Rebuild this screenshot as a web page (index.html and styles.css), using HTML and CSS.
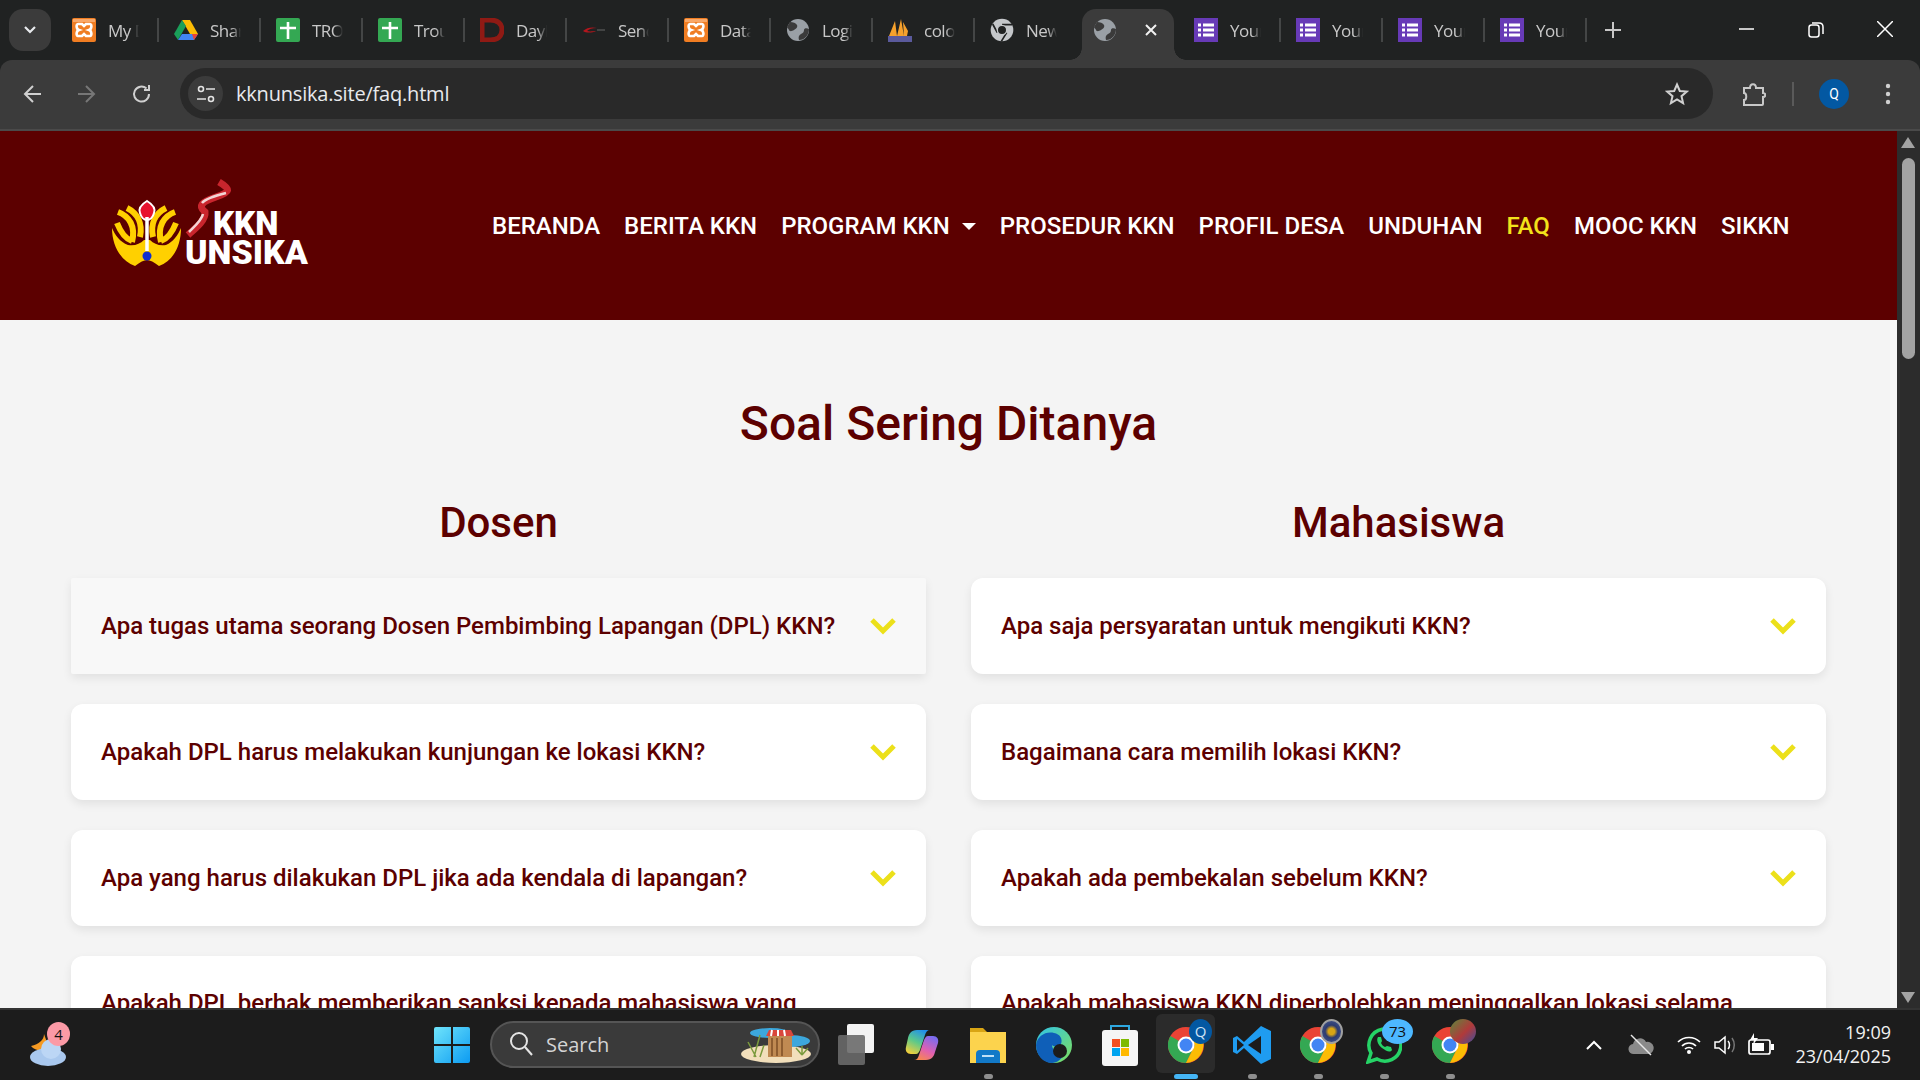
FILE: index.html
```html
<!DOCTYPE html>
<html lang="en">
<head>
    <meta charset="UTF-8">
    <title>FAQ - KKN Unsika</title>
    <link rel="stylesheet" href="styles.css">
</head>
<body>
    <!-- shared icons -->
    <svg class="defs" width="0" height="0">
        <symbol id="i-xampp" viewBox="0 0 24 24">
            <rect width="24" height="24" rx="2" fill="#f07d22"/>
            <rect x="1" y="1" width="22" height="3" fill="#f9a868"/>
            <path d="M6 6h4l2 2 2-2h4c2 0 2 5-1 6 3 1 3 6 1 6h-4l-2-2-2 2H6c-2 0-2-5 1-6-3-1-3-6-1-6z" fill="none" stroke="#fff" stroke-width="2.6"/>
        </symbol>
        <symbol id="i-sheets" viewBox="0 0 24 24">
            <rect width="24" height="24" rx="2" fill="#34a853"/>
            <path d="M12 4v17M4 10h16" stroke="#fff" stroke-width="2.6"/>
        </symbol>
        <symbol id="i-forms" viewBox="0 0 24 24">
            <rect width="24" height="24" fill="#673ab7"/>
            <path d="M9 7h11M9 12h11M9 17h11M4 7h3M4 12h3M4 17h3" stroke="#fff" stroke-width="3"/>
        </symbol>
        <symbol id="i-globe" viewBox="0 0 24 24">
            <circle cx="12" cy="12" r="11" fill="#9aa0a6"/>
            <path d="M4 4c3 0 6 1 7 3s-1 4-3 5-4 2-5 0-2-2-2-3zM13 22c-1-3 0-5 2-6s3-2 3-4 3-2 5-1c0 6-4 11-10 11z" fill="#3b3b3b"/>
        </symbol>
        <symbol id="i-chrome" viewBox="0 0 36 36">
            <circle cx="18" cy="18" r="18" fill="#ea4335"/>
            <path d="M18 18L2.4 9A18 18 0 0 0 18 36L27 18z" fill="#34a853"/>
            <path d="M18 10h15.600A18 18 0 0 1 18 36l9-18z" fill="#fbbc04"/>
            <circle cx="18" cy="18" r="8.500" fill="#fff"/>
            <circle cx="18" cy="18" r="6.500" fill="#4285f4"/>
        </symbol>
    </svg>

    <div class="tabstrip">
        <button class="tab-search">
            <svg width="14" height="10" viewBox="0 0 14 10"><path d="M2 2l5 5 5-5" fill="none" stroke="#e8eaed" stroke-width="2.200"/></svg>
        </button>
        <div class="tab"><svg class="favicon"><use href="#i-xampp"/></svg><span class="tab-label">My Dashboard</span></div>
        <div class="tab">
            <svg class="favicon" viewBox="0 0 24 24"><path d="M8 2h8l8 14h-8z" fill="#fbbc04"/><path d="M8 2L0 16l4 6 8-14z" fill="#1a9f5a"/><path d="M4 22h16l4-6H8z" fill="#4285f4"/><path d="M20 22l4-6h-6z" fill="#ea4335"/></svg>
            <span class="tab-label">Shared</span>
        </div>
        <div class="tab"><svg class="favicon"><use href="#i-sheets"/></svg><span class="tab-label">TROUBLE</span></div>
        <div class="tab"><svg class="favicon"><use href="#i-sheets"/></svg><span class="tab-label">Trouble</span></div>
        <div class="tab">
            <svg class="favicon" viewBox="0 0 24 24"><path d="M2 2h8c8 0 12 4 12 10s-4 10-12 10H2z" fill="none" stroke="#8f1a14" stroke-width="5"/></svg>
            <span class="tab-label">Daybook</span>
        </div>
        <div class="tab">
            <svg class="favicon" viewBox="0 0 24 24"><path d="M1 13c4-4 10-4 14-3-5 0-8 1-10 3 3 1 7 0 9 0-4 2-10 2-13 0z" fill="#b3161d"/><path d="M15 12h8" stroke="#666" stroke-width="1"/></svg>
            <span class="tab-label">Sendiri</span>
        </div>
        <div class="tab"><svg class="favicon"><use href="#i-xampp"/></svg><span class="tab-label">Database</span></div>
        <div class="tab"><svg class="favicon"><use href="#i-globe"/></svg><span class="tab-label">Login</span></div>
        <div class="tab">
            <svg class="favicon" viewBox="0 0 24 24"><path d="M1 18L7 3l2 15zM9 18l4-17 3 17zM15 4l5 9-1 5h-3z" fill="#f6a12c"/><rect x="0" y="18" width="24" height="6" fill="#5a5a9c"/></svg>
            <span class="tab-label">colors</span>
        </div>
        <div class="tab tab-nosep"><svg class="favicon" viewBox="0 0 36 36"><circle cx="18" cy="18" r="17" fill="#c4c7ca"/><path d="M18 10h15M11 22L4 9M25 22l-8 13" stroke="#202222" stroke-width="2.500"/><circle cx="18" cy="18" r="7" fill="#202222" stroke="#c4c7ca" stroke-width="2"/></svg><span class="tab-label">New Tab</span></div>
        <div class="tab tab-active">
            <svg class="favicon"><use href="#i-globe"/></svg>
            <svg class="tab-close" width="14" height="14" viewBox="0 0 14 14"><path d="M2 2l10 10M12 2L2 12" stroke="#f1f1f1" stroke-width="2"/></svg>
        </div>
        <div class="tab"><svg class="favicon"><use href="#i-forms"/></svg><span class="tab-label">Your form</span></div>
        <div class="tab"><svg class="favicon"><use href="#i-forms"/></svg><span class="tab-label">Your form</span></div>
        <div class="tab"><svg class="favicon"><use href="#i-forms"/></svg><span class="tab-label">Your form</span></div>
        <div class="tab"><svg class="favicon"><use href="#i-forms"/></svg><span class="tab-label">Your form</span></div>
        <svg class="new-tab" width="16" height="16" viewBox="0 0 16 16"><path d="M8 0v16M0 8h16" stroke="#c7c7c7" stroke-width="2"/></svg>
        <div class="window-controls">
            <svg width="16" height="16" viewBox="0 0 16 16"><path d="M0 8h15" stroke="#fff" stroke-width="1.500"/></svg>
            <svg width="16" height="18" viewBox="0 0 16 18"><rect x="1" y="4" width="10" height="12" rx="2.500" fill="none" stroke="#fff" stroke-width="1.500"/><path d="M4 2h7c2 0 4 1 4 4v7" fill="none" stroke="#fff" stroke-width="1.500"/></svg>
            <svg width="16" height="16" viewBox="0 0 16 16"><path d="M0 0l16 16M16 0L0 16" stroke="#fff" stroke-width="1.500"/></svg>
        </div>
    </div>

    <div class="toolbar">
        <svg class="tool-icon" width="20" height="20" viewBox="0 0 20 20"><path d="M18 10H3M10 2l-8 8 8 8" fill="none" stroke="#d0d0d0" stroke-width="2"/></svg>
        <svg class="tool-icon" width="20" height="20" viewBox="0 0 20 20"><path d="M2 10h15M10 2l8 8-8 8" fill="none" stroke="#777" stroke-width="2"/></svg>
        <svg class="tool-icon reload" width="20" height="20" viewBox="0 0 20 20"><path d="M17 10a7.500 7.500 0 1 1-2.500-5.500M17 1v5h-5" fill="none" stroke="#d0d0d0" stroke-width="2"/></svg>
        <div class="addressbar">
            <span class="site-info">
                <svg width="20" height="20" viewBox="0 0 20 20"><circle cx="5" cy="5" r="2.500" fill="none" stroke="#e3e3e3" stroke-width="1.600"/><path d="M10 5h9M1 15h9" stroke="#e3e3e3" stroke-width="1.600"/><circle cx="15" cy="15" r="2.500" fill="none" stroke="#e3e3e3" stroke-width="1.600"/></svg>
            </span>
            <span class="url">kknunsika.site/faq.html</span>
            <svg class="star" width="24" height="24" viewBox="0 0 24 24"><path d="M12 2.500l2.800 6.500 7 .6-5.300 4.600 1.600 6.900-6.100-3.700-6.100 3.700 1.600-6.900L2.200 9.600l7-.6z" fill="none" stroke="#d0d0d0" stroke-width="2"/></svg>
        </div>
        <svg class="ext-icon" width="24" height="26" viewBox="0 0 24 26"><path d="M2 7h6c0-5 6-5 6 0h7v5c3 0 3 4 0 4v7a1 1 0 0 1-1 1H2v-5c3 0 3-7 0-7z" fill="none" stroke="#c8c8c8" stroke-width="2"/></svg>
        <span class="tool-sep"></span>
        <span class="avatar">Q</span>
        <svg class="menu-dots" width="6" height="24" viewBox="0 0 6 24"><circle cx="3" cy="4" r="2.200" fill="#d0d0d0"/><circle cx="3" cy="12" r="2.200" fill="#d0d0d0"/><circle cx="3" cy="20" r="2.200" fill="#d0d0d0"/></svg>
    </div>

    <div class="viewport">
        <div class="page">
            <header class="site-header">
                <svg class="logo" width="280" height="120" viewBox="0 0 280 120">
                    <!-- emblem -->
                    <path d="M32 67c0 18 9 33 23 38 5-4 9-6 12-6s7 2 12 6c14-5 22-20 22-38-3 7-8 14-15 17-7 1-12-1-16-5l-6 0c-4 4-9 6-16 5-8-3-13-10-16-17z" fill="#ffd000"/>
                    <path d="M38 51c11 4 18 14 14 30M47 47c10 5 16 15 13 29M95 51c-11 4-18 14-14 30M86 47c-10 5-16 15-13 29" fill="none" stroke="#ffd000" stroke-width="6"/>
                    <path d="M37 62c4 10 9 16 15 18M96 62c-4 10-9 16-15 18" fill="none" stroke="#ffd000" stroke-width="6"/>
                    <path d="M60 52c-2-5 2-9 7-12 5 3 9 7 7 12-1 4-4 7-7 7s-6-3-7-7z" fill="#e8112d" stroke="#fff" stroke-width="2"/>
                    <path d="M67 56v34" stroke="#fff" stroke-width="3.500"/>
                    <circle cx="67" cy="95" r="4.500" fill="#0f2fd0"/>
                    <!-- ribbon -->
                    <path d="M139 21c12 7 12 10-3 15-15 5-18 9-11 15 1 8-9 16-17 23" fill="none" stroke="#c9252d" stroke-width="7"/>
                    <path d="M146 32c-8 2-20 5-24 10M123 53c-1 6-8 12-14 18" fill="none" stroke="#f3d5d5" stroke-width="2.500"/>
                    <text class="logo-text" x="133" y="74" font-size="33">KKN</text>
                    <text class="logo-text" x="105" y="103" font-size="34">UNSIKA</text>
                </svg>
                <nav class="site-nav">
                    <a href="#">BERANDA</a>
                    <a href="#">BERITA KKN</a>
                    <a href="#" class="has-caret">PROGRAM KKN</a>
                    <a href="#">PROSEDUR KKN</a>
                    <a href="#">PROFIL DESA</a>
                    <a href="#">UNDUHAN</a>
                    <a href="#" class="current">FAQ</a>
                    <a href="#">MOOC KKN</a>
                    <a href="#">SIKKN</a>
                </nav>
            </header>

            <main class="faq">
                <h1>Soal Sering Ditanya</h1>
                <div class="faq-columns">
                    <section>
                        <h2>Dosen</h2>
                        <div class="faq-item faq-hover"><span>Apa tugas utama seorang Dosen Pembimbing Lapangan (DPL) KKN?</span><svg class="chevron" viewBox="0 0 28 18"><path d="M3 3l11 11L25 3"/></svg></div>
                        <div class="faq-item"><span>Apakah DPL harus melakukan kunjungan ke lokasi KKN?</span><svg class="chevron" viewBox="0 0 28 18"><path d="M3 3l11 11L25 3"/></svg></div>
                        <div class="faq-item"><span>Apa yang harus dilakukan DPL jika ada kendala di lapangan?</span><svg class="chevron" viewBox="0 0 28 18"><path d="M3 3l11 11L25 3"/></svg></div>
                        <div class="faq-item faq-long"><span>Apakah DPL berhak memberikan sanksi kepada mahasiswa yang</span><svg class="chevron" viewBox="0 0 28 18"><path d="M3 3l11 11L25 3"/></svg></div>
                    </section>
                    <section>
                        <h2>Mahasiswa</h2>
                        <div class="faq-item"><span>Apa saja persyaratan untuk mengikuti KKN?</span><svg class="chevron" viewBox="0 0 28 18"><path d="M3 3l11 11L25 3"/></svg></div>
                        <div class="faq-item"><span>Bagaimana cara memilih lokasi KKN?</span><svg class="chevron" viewBox="0 0 28 18"><path d="M3 3l11 11L25 3"/></svg></div>
                        <div class="faq-item"><span>Apakah ada pembekalan sebelum KKN?</span><svg class="chevron" viewBox="0 0 28 18"><path d="M3 3l11 11L25 3"/></svg></div>
                        <div class="faq-item faq-long"><span>Apakah mahasiswa KKN diperbolehkan meninggalkan lokasi selama</span><svg class="chevron" viewBox="0 0 28 18"><path d="M3 3l11 11L25 3"/></svg></div>
                    </section>
                </div>
            </main>
        </div>
        <div class="scrollbar">
            <span class="arrow-up"></span>
            <span class="thumb"></span>
            <span class="arrow-down"></span>
        </div>
    </div>

    <footer class="taskbar">
        <div class="weather">
            <svg width="36" height="42" viewBox="0 0 36 42"><path d="M14 10c0 6-5 10-13 12 4 5 12 6 18 2z" fill="#f59a23"/><ellipse cx="18" cy="33" rx="18" ry="9" fill="#a9c8ee"/><circle cx="21" cy="25" r="10" fill="#bcd6f5"/></svg>
            <span class="weather-badge">4</span>
        </div>
        <svg class="start" width="36" height="36" viewBox="0 0 36 36">
            <defs><linearGradient id="win" x1="0" y1="0" x2="1" y2="1"><stop offset="0" stop-color="#6fe4fb"/><stop offset="1" stop-color="#0c9bf2"/></linearGradient></defs>
            <path d="M0 2a2 2 0 0 1 2-2h15v17H0zM19 0h15a2 2 0 0 1 2 2v15H19zM0 19h17v17H2a2 2 0 0 1-2-2zM19 19h17v15a2 2 0 0 1-2 2H19z" fill="url(#win)"/>
        </svg>
        <div class="searchbox">
            <svg width="24" height="26" viewBox="0 0 24 26"><circle cx="10" cy="10" r="8" fill="none" stroke="#e5e5e5" stroke-width="2"/><path d="M16 16l7 8" stroke="#e5e5e5" stroke-width="2"/></svg>
            <span class="search-text">Search</span>
            <svg class="search-art" width="72" height="40" viewBox="0 0 72 40">
                <ellipse cx="36" cy="30" rx="35" ry="9" fill="#f2dfbb"/>
                <ellipse cx="30" cy="9" rx="20" ry="5" fill="#3ca7dc"/>
                <ellipse cx="50" cy="17" rx="20" ry="6" fill="#3ca7dc"/>
                <rect x="28" y="12" width="24" height="21" fill="#c08a52"/>
                <path d="M26 12l3-6h22l3 6z" fill="#d9473c"/>
                <path d="M32 6l-1 6M38 6v6M44 6l1 6" stroke="#fff" stroke-width="2"/>
                <path d="M32 14v18M37 14v18M42 14v18" stroke="#7d4f26" stroke-width="1.500"/>
                <path d="M14 33l6-22M16 33L8 18M20 33l4-12M62 31l-6-7M62 31l6-7M62 31v-9" stroke="#7a9a3c" stroke-width="1.500"/>
            </svg>
        </div>
        <div class="task-icons">
            <div class="task-slot">
                <svg width="36" height="42" viewBox="0 0 36 42"><rect x="9" y="0" width="27" height="29" rx="2" fill="#f3f3f3"/><rect x="0" y="11" width="27" height="30" rx="2" fill="#6a6a6a" opacity=".9"/></svg>
            </div>
            <div class="task-slot">
                <svg width="34" height="32" viewBox="0 0 34 32">
                    <defs>
                        <linearGradient id="cop-l" x1="0.7" y1="0" x2="0.2" y2="1"><stop offset="0" stop-color="#1f8fee"/><stop offset=".5" stop-color="#5cc98a"/><stop offset="1" stop-color="#f5cf3a"/></linearGradient>
                        <linearGradient id="cop-r" x1="0.7" y1="0" x2="0.2" y2="1"><stop offset="0" stop-color="#7a6cf0"/><stop offset=".55" stop-color="#e060b0"/><stop offset="1" stop-color="#f98a4a"/></linearGradient>
                    </defs>
                    <path d="M12 1C6 1 4 5 3 9L1 18C0 22 2 25 6 25H11C13 25 14 23 15 21L20 6C21 3 22 1 25 1Z" fill="url(#cop-l)"/>
                    <path d="M21 31C27 31 29 27 30 23L33 14C34 10 32 7 28 7H23C21 7 20 9 19 11L14 26C13 29 12 31 9 31Z" fill="url(#cop-r)"/>
                </svg>
            </div>
            <div class="task-slot running">
                <svg width="36" height="36" viewBox="0 0 36 36"><path d="M0 1h13l4 4h19v31H0z" fill="#d9a514"/><rect y="5" width="36" height="31" fill="#fcd34d"/><path d="M6 27a4 4 0 0 1 4-4h16a4 4 0 0 1 4 4v9H6z" fill="#1279c8"/><rect x="12" y="28" width="12" height="2" fill="#bfe0f7"/></svg>
            </div>
            <div class="task-slot">
                <svg width="36" height="36" viewBox="0 0 36 36">
                    <defs><linearGradient id="edge" x1="0" y1="0" x2="1" y2="1"><stop offset="0" stop-color="#2fc3e8"/><stop offset="1" stop-color="#7fe05c"/></linearGradient></defs>
                    <circle cx="18" cy="18" r="18" fill="url(#edge)"/>
                    <path d="M0 18C1 9 10 4 18 6c6 1 9 6 7 11-2 3-8 3-9 1 0 5 6 9 13 8-3 6-8 10-13 10C7 36 0 28 0 18z" fill="#0f5fb8"/>
                    <circle cx="24" cy="24" r="7" fill="#1c1c1c"/>
                </svg>
            </div>
            <div class="task-slot">
                <svg width="36" height="42" viewBox="0 0 36 42"><path d="M9 10V2h18v8" fill="none" stroke="#2ea8e0" stroke-width="2"/><rect y="6" width="36" height="36" rx="3" fill="#f5f5f5"/><rect x="10" y="15" width="8" height="8" fill="#f25022"/><rect x="19" y="15" width="8" height="8" fill="#7fba00"/><rect x="10" y="24" width="8" height="8" fill="#00a4ef"/><rect x="19" y="24" width="8" height="8" fill="#ffb900"/></svg>
            </div>
            <div class="task-slot active">
                <svg class="chrome" width="36" height="36"><use href="#i-chrome"/></svg>
                <span class="slot-badge slot-q">Q</span>
            </div>
            <div class="task-slot running">
                <svg width="38" height="38" viewBox="0 0 38 38"><path d="M28 0l10 5v28l-10 5-17-16-7 6-4-2v-14l4-2 7 6z" fill="#1f9cf0"/><path d="M28 10L15 19l13 9z" fill="#1c1c1c"/><path d="M4 13l7 6-7 6z" fill="#1c1c1c"/></svg>
            </div>
            <div class="task-slot running">
                <svg class="chrome" width="36" height="36"><use href="#i-chrome"/></svg>
                <span class="slot-badge slot-crest"></span>
            </div>
            <div class="task-slot running">
                <svg width="36" height="38" viewBox="0 0 36 38"><path d="M2 36l3-9a16 16 0 1 1 6 6z" fill="none" stroke="#25d366" stroke-width="3.500"/><path d="M12 11c-2 3 0 8 4 11s8 5 10 2l-1-3-4-1-2 1c-2-1-3-2-4-4l1-2-1-4z" fill="#25d366"/></svg>
                <span class="slot-badge slot-count">73</span>
            </div>
            <div class="task-slot running">
                <svg class="chrome" width="36" height="36"><use href="#i-chrome"/></svg>
                <span class="slot-badge slot-photo"></span>
            </div>
        </div>
        <div class="tray">
            <svg width="16" height="10" viewBox="0 0 16 10"><path d="M1 9l7-7 7 7" fill="none" stroke="#fff" stroke-width="2"/></svg>
            <svg class="tray-cloud" width="26" height="22" viewBox="0 0 26 22"><path d="M6 20a5 5 0 0 1-1-10 7 7 0 0 1 13-2 6 6 0 0 1 3 12z" fill="#8a8a8a"/><path d="M3 1l20 20" stroke="#e8e8e8" stroke-width="1.500"/></svg>
            <svg class="tray-wifi" width="24" height="20" viewBox="0 0 24 20"><path d="M1 7c6-6 16-6 22 0M5 11c4-4 10-4 14 0M8 14c2-2 6-2 8 0" fill="none" stroke="#fff" stroke-width="1.700"/><circle cx="12" cy="17" r="2" fill="#fff"/></svg>
            <svg class="tray-volume" width="24" height="20" viewBox="0 0 24 20"><path d="M1 7h4l6-5v16l-6-5H1z" fill="none" stroke="#fff" stroke-width="1.500"/><path d="M14 6c2 2 2 6 0 8" fill="none" stroke="#fff" stroke-width="1.500"/><path d="M18 3c3 4 3 10 0 14" fill="none" stroke="#777" stroke-width="1.500"/></svg>
            <svg class="tray-battery" width="26" height="24" viewBox="0 0 26 24"><rect x="1" y="7" width="21" height="14" rx="2" fill="none" stroke="#fff" stroke-width="1.700"/><rect x="4" y="10" width="12" height="8" fill="#fff"/><rect x="23" y="11" width="3" height="6" fill="#fff"/><path d="M6 0L2 7h4l-1 5 5-7H6z" fill="#fff"/></svg>
        </div>
        <div class="clock">
            <span>19:09</span>
            <span>23/04/2025</span>
        </div>
    </footer>
</body>
</html>
```

FILE: styles.css
```css
* {
    box-sizing: border-box;
}
html, body {
    height: 100%;
}
body {
    margin: 0;
    width: 1920px;
    height: 1080px;
    overflow: hidden;
    display: flex;
    flex-direction: column;
    font-family: 'Roboto', sans-serif;
    background: #202222;
}
.defs {
    position: absolute;
}
svg {
    display: block;
    flex-shrink: 0;
}

/* browser tabs */
.tabstrip {
    height: 60px;
    flex-shrink: 0;
    display: flex;
    padding-left: 9px;
    background: #202222;
    font-family: 'Open Sans', sans-serif;
}
.tab-search {
    width: 42px;
    height: 42px;
    margin: 9px 6px 0 0;
    border: none;
    border-radius: 14px;
    background: #3b3b3b;
    display: flex;
    align-items: center;
    justify-content: center;
    padding: 0;
}
.tab {
    width: 102px;
    height: 60px;
    padding: 18px 0 0 15px;
    display: flex;
    gap: 12px;
    position: relative;
    color: #c8c8c8;
}
.tab::after {
    content: "";
    position: absolute;
    right: 0;
    top: 18px;
    width: 2px;
    height: 24px;
    background: #444646;
}
.tab-nosep::after {
    display: none;
}
.favicon {
    width: 24px;
    height: 24px;
}
.tab-label {
    width: 31px;
    height: 26px;
    overflow: hidden;
    white-space: nowrap;
    font-size: 17px;
    line-height: 26px;
    letter-spacing: -0.5px;
    -webkit-mask-image: linear-gradient(to right, #000 70%, transparent);
    mask-image: linear-gradient(to right, #000 70%, transparent);
}
.tab-active {
    margin: 9px 5px 0;
    width: 92px;
    height: 51px;
    padding: 9px 0 0 11px;
    gap: 27px;
    background: #3b3b3b;
    border-radius: 14px 14px 0 0;
}
.tab-active::after {
    display: none;
}
.tab-active::before {
    content: "";
    position: absolute;
    left: -12px;
    right: -12px;
    bottom: 0;
    height: 12px;
    z-index: 0;
    background:
        radial-gradient(circle at 0 0, #202222 11.5px, #3b3b3b 12px) left bottom / 12px 12px no-repeat,
        radial-gradient(circle at 100% 0, #202222 11.5px, #3b3b3b 12px) right bottom / 12px 12px no-repeat;
}
.tab-close {
    margin-top: 5px;
}
.new-tab {
    margin: 22px 0 0 18px;
}
.window-controls {
    margin-left: auto;
    display: flex;
    gap: 53px;
    padding: 21px 27px 0 0;
}

/* address bar row */
.toolbar {
    height: 71px;
    flex-shrink: 0;
    display: flex;
    align-items: center;
    padding-bottom: 2px;
    background: #3b3b3b;
    border-bottom: 2px solid #4a4a4a;
    border-radius: 12px 12px 0 0;
}
.tool-icon {
    margin-left: 23px;
    margin-right: 10px;
}
.tool-icon.reload {
    margin-left: 26px;
}
.addressbar {
    width: 1533px;
    height: 51px;
    margin-left: 18px;
    display: flex;
    align-items: center;
    padding-left: 8px;
    background: #292929;
    border-radius: 26px;
}
.site-info {
    width: 35px;
    height: 35px;
    border-radius: 50%;
    background: #3b3b3b;
    display: flex;
    align-items: center;
    justify-content: center;
}
.url {
    margin-left: 13px;
    font-family: 'Open Sans', sans-serif;
    font-size: 20px;
    letter-spacing: -0.2px;
    color: #e8eaed;
}
.star {
    margin-left: auto;
    margin-right: 24px;
}
.ext-icon {
    margin-left: 29px;
}
.tool-sep {
    width: 2px;
    height: 24px;
    margin-left: 26px;
    background: #5a5a5a;
}
.avatar {
    width: 30px;
    height: 30px;
    margin-left: 25px;
    border-radius: 50%;
    background: #0358a2;
    color: #fff;
    font-size: 14px;
    text-align: center;
    line-height: 30px;
}
.menu-dots {
    margin-left: 36px;
}

/* the page itself */
.viewport {
    flex: 1;
    min-height: 0;
    display: flex;
}
.page {
    flex: 1;
    overflow: hidden;
    background: #f4f4f4;
}
.site-header {
    height: 189px;
    display: flex;
    align-items: center;
    padding-left: 80px;
    background: #5c0000;
}
.logo {
    margin-bottom: 9px;
}
.logo-text {
    font-family: 'Roboto', sans-serif;
    font-weight: 900;
    fill: #fff;
}
.site-nav {
    display: flex;
    gap: 24px;
    margin-left: 132px;
}
.site-nav a {
    color: #fff;
    font-size: 24px;
    font-weight: 500;
    text-decoration: none;
    white-space: nowrap;
}
.site-nav a.current {
    color: #f2e21b;
}
.has-caret::after {
    content: "";
    display: inline-block;
    margin-left: 12px;
    vertical-align: 4px;
    border-top: 7px solid #fff;
    border-left: 7px solid transparent;
    border-right: 7px solid transparent;
}
.faq {
    padding: 76px 71px 0;
}
.faq h1 {
    margin: 0;
    text-align: center;
    font-size: 48px;
    line-height: 56px;
    font-weight: 500;
    color: #5c0000;
}
.faq-columns {
    display: grid;
    grid-template-columns: 855px 855px;
    gap: 45px;
    margin-top: 47px;
}
.faq h2 {
    margin: 0 0 32px;
    text-align: center;
    font-size: 42px;
    line-height: 47px;
    font-weight: 500;
    color: #5c0000;
}
.faq-item {
    min-height: 96px;
    margin-bottom: 30px;
    padding: 33px 29px 33px 30px;
    display: flex;
    align-items: center;
    justify-content: space-between;
    gap: 20px;
    background: #fff;
    border-radius: 12px;
    box-shadow: 0 4px 10px rgba(0,0,0,0.08);
    font-size: 24px;
    line-height: 29px;
    font-weight: 500;
    color: #5c0000;
}
.faq-hover {
    background: #f8f8f8;
    border-radius: 2px;
}
/* two line question, the fold cuts it after the first line */
.faq-long {
    min-height: 125px;
}
.faq-long span {
    align-self: flex-start;
}
.chevron {
    width: 28px;
    height: 18px;
    fill: none;
    stroke: #ece01a;
    stroke-width: 5;
}

/* fake scrollbar */
.scrollbar {
    width: 23px;
    flex-shrink: 0;
    background: #2c2c2c;
    position: relative;
}
.arrow-up, .arrow-down {
    position: absolute;
    left: 4px;
    border-left: 7.5px solid transparent;
    border-right: 7.5px solid transparent;
}
.arrow-up {
    top: 6px;
    border-bottom: 11px solid #a3a3a3;
}
.arrow-down {
    bottom: 5px;
    border-top: 11px solid #a3a3a3;
}
.thumb {
    position: absolute;
    left: 5px;
    top: 27px;
    width: 13px;
    height: 201px;
    border-radius: 7px;
    background: #a3a3a3;
}

/* windows taskbar */
.taskbar {
    height: 72px;
    flex-shrink: 0;
    display: flex;
    align-items: center;
    background: #1c1c1c;
    border-top: 2px solid #333;
    color: #fff;
    font-family: 'Open Sans', sans-serif;
}
.weather {
    position: relative;
    margin-left: 30px;
    width: 36px;
    height: 42px;
}
.weather-badge {
    position: absolute;
    left: 17px;
    top: -2px;
    width: 23px;
    height: 24px;
    border-radius: 50%;
    background: #fb9aa6;
    color: #111;
    font-size: 15px;
    line-height: 24px;
    text-align: center;
}
.start {
    margin-left: 368px;
}
.searchbox {
    width: 330px;
    height: 47px;
    margin: 0 0 2px 20px;
    display: flex;
    align-items: center;
    padding-left: 17px;
    background: #3a3a3a;
    border: 2px solid #555;
    border-radius: 24px;
}
.search-text {
    margin-left: 13px;
    font-size: 20px;
    color: #d4d4d4;
}
.search-art {
    margin-left: auto;
    margin-right: 6px;
}
.task-icons {
    display: flex;
    margin-left: 3px;
}
.task-slot {
    width: 66px;
    height: 70px;
    display: flex;
    align-items: center;
    justify-content: center;
    position: relative;
}
.task-slot.running::after, .task-slot.active::after {
    content: "";
    position: absolute;
    left: 50%;
    bottom: 1px;
    width: 9px;
    height: 5px;
    margin-left: -4.5px;
    border-radius: 3px;
    background: #8e8e8e;
}
/* highlight tile sits under the active icon */
.task-slot.active::before {
    content: "";
    position: absolute;
    left: 3px;
    right: 4px;
    top: 4px;
    bottom: 7px;
    background: #2b2b2b;
    border-radius: 6px;
}
.task-slot.active::after {
    width: 24px;
    margin-left: -12px;
    background: #45b5f5;
}
.chrome {
    position: relative;
}
.slot-badge {
    position: absolute;
    top: 9px;
    left: 36px;
    width: 23px;
    height: 25px;
    border-radius: 50%;
    font-size: 15px;
    line-height: 25px;
    text-align: center;
    color: #cfe3f5;
}
.slot-q {
    background: #0358a2;
}
.slot-crest {
    left: 35px;
    background: radial-gradient(circle, #d9a514 0 22%, #2c3a70 45%, #3a4a80 70%);
    border: 2px solid #a0a0a0;
}
.slot-count {
    left: 31px;
    top: 9px;
    width: 31px;
    background: #4db8ff;
    color: #111;
}
.slot-photo {
    left: 33px;
    width: 26px;
    background: linear-gradient(135deg, #5a8a3c, #b03a3a 55%, #3a4ea0);
}
.tray {
    display: flex;
    align-items: center;
    gap: 13px;
    margin-left: 103px;
}
.tray-cloud {
    margin-left: 13px;
}
.tray-wifi {
    margin-left: 10px;
}
.tray-battery {
    margin-left: -3px;
}
.clock {
    margin-left: auto;
    padding: 0 29px 3px 0;
    display: flex;
    flex-direction: column;
    align-items: flex-end;
    font-size: 18px;
    line-height: 24px;
    color: #f2f2f2;
}
```
